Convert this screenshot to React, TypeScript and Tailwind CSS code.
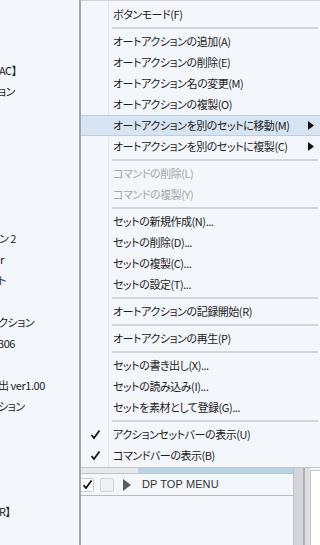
import React from "react";

type Item =
  | { kind: "sep" }
  | { kind: "item"; label: string; disabled?: boolean; checked?: boolean; sub?: boolean; active?: boolean };

const items: Item[] = [
  { kind: "item", label: "ボタンモード(F)" },
  { kind: "sep" },
  { kind: "item", label: "オートアクションの追加(A)" },
  { kind: "item", label: "オートアクションの削除(E)" },
  { kind: "item", label: "オートアクション名の変更(M)" },
  { kind: "item", label: "オートアクションの複製(O)" },
  { kind: "item", label: "オートアクションを別のセットに移動(M)", sub: true, active: true },
  { kind: "item", label: "オートアクションを別のセットに複製(C)", sub: true },
  { kind: "sep" },
  { kind: "item", label: "コマンドの削除(L)", disabled: true },
  { kind: "item", label: "コマンドの複製(Y)", disabled: true },
  { kind: "sep" },
  { kind: "item", label: "セットの新規作成(N)..." },
  { kind: "item", label: "セットの削除(D)..." },
  { kind: "item", label: "セットの複製(C)..." },
  { kind: "item", label: "セットの設定(T)..." },
  { kind: "sep" },
  { kind: "item", label: "オートアクションの記録開始(R)" },
  { kind: "sep" },
  { kind: "item", label: "オートアクションの再生(P)" },
  { kind: "sep" },
  { kind: "item", label: "セットの書き出し(X)..." },
  { kind: "item", label: "セットの読み込み(I)..." },
  { kind: "item", label: "セットを素材として登録(G)..." },
  { kind: "sep" },
  { kind: "item", label: "アクションセットバーの表示(U)", checked: true },
  { kind: "item", label: "コマンドバーの表示(B)", checked: true },
];

const leftRows: { text: string; cls?: string }[] = [
  { text: "" },
  { text: "" },
  { text: "" },
  { text: "AC】", cls: "-ml-[1px]" },
  { text: "ョン", cls: "-ml-[2px]" },
  { text: "" },
  { text: "" },
  { text: "" },
  { text: "" },
  { text: "" },
  { text: "" },
  { text: "ン 2", cls: "-ml-[1px]" },
  { text: "r" },
  { text: "ト", cls: "-ml-[2px] text-[#1f2f4f]" },
  { text: "" },
  { text: "クション", cls: "-ml-[2px]" },
  { text: "306", cls: "-ml-[2px]" },
  { text: "" },
  { text: "出 ver1.00", cls: "-ml-[2px]" },
  { text: "ション", cls: "-ml-[2px]" },
  { text: "" },
  { text: "" },
  { text: "" },
  { text: "" },
  { text: "R】", cls: "-ml-[1px]" },
];

function Check() {
  return (
    <svg width="11" height="11" viewBox="0 0 11 11">
      <path d="M1.5 6 L4 9 L9.5 1.5" fill="none" stroke="#111" strokeWidth="1.7" strokeLinejoin="miter" />
    </svg>
  );
}

export default function App() {
  return (
    <div
      className="w-[320px] h-[545px] overflow-hidden flex bg-[#f3f6fb] text-[#1c1c1c] [font-family:'Noto_Sans_CJK_JP','Noto_Sans',sans-serif] [font-feature-settings:'palt'] text-[11px] tracking-[-0.45px]"
    >
      {/* left panel */}
      <div className="w-[79px] shrink-0 overflow-hidden flex flex-col -mt-[3px]">
        {leftRows.map((r, i) => (
          <div key={i} className="h-[21px] shrink-0 flex items-center whitespace-nowrap">
            <span className={r.cls ?? ""}>{r.text}</span>
          </div>
        ))}
      </div>
      {/* splitter */}
      <div className="w-[2px] shrink-0 bg-[#a3a5aa]" />
      {/* right */}
      <div className="flex-1 flex flex-col min-w-0">
        {/* menu */}
        <div className="h-[468px] shrink-0 border-t border-[#d0d2d6] border-b border-b-[#c4c6ca] bg-[#f3f6fb] relative flex flex-col pt-[3px]">
          <div className="absolute left-[27px] top-0 bottom-0 w-px bg-[#e2e5ea]" />
          {items.map((it, i) =>
            it.kind === "sep" ? (
              <div key={i} className="h-[6px] shrink-0 flex items-center pl-[31px] pr-[2px]">
                <div className="h-[2px] w-full bg-[#d2d4d8]" />
              </div>
            ) : (
              <div
                key={i}
                className={
                  "h-[21px] shrink-0 flex items-center relative " +
                  (it.active ? "bg-[#d7e4f2] border-y border-[#b9cfe6]" : "")
                }
              >
                <div className="w-[27px] shrink-0 flex items-center justify-center pl-[2px]">
                  {it.checked ? <Check /> : null}
                </div>
                <div className={"pl-[5px] flex-1 whitespace-nowrap " + (it.disabled ? "text-[#a4a6aa]" : "text-[#1c1c1c]")}>
                  {it.label}
                </div>
                {it.sub ? (
                  <div className="absolute right-[6px] top-0 bottom-0 flex items-center">
                    <svg width="6" height="9" viewBox="0 0 6 9">
                      <path d="M0 0 L6 4.5 L0 9 Z" fill="#111" />
                    </svg>
                  </div>
                ) : null}
              </div>
            )
          )}
        </div>
        {/* below menu */}
        <div className="flex-1 flex min-h-0">
          <div className="w-[212px] shrink-0 flex flex-col">
            <div className="h-[6px] shrink-0 flex border-b border-[#c2c4c8]">
              <div className="w-[57px] shrink-0 bg-[#e6e8ec]" />
              <div className="flex-1 bg-[#b6d5e6]" />
            </div>
            <div className="h-[22px] shrink-0 flex items-center border-b border-[#b9bbbf] text-[11px] tracking-normal text-[#333] [font-family:'Liberation_Sans',Arial,sans-serif]">
              <div className="w-[13px] h-[14px] shrink-0 bg-white border border-l-0 border-[#c8cacd] rounded-r-[2px] flex items-center justify-center">
                <Check />
              </div>
              <div className="w-[14px] h-[14px] shrink-0 ml-[6px] bg-[#f0f1f3] border border-[#cfd1d4] rounded-[2px]" />
              <div className="ml-[9px] w-[10px] shrink-0 flex items-center">
                <svg width="8" height="12" viewBox="0 0 8 12">
                  <path d="M0 0 L8 6 L0 12 Z" fill="#5a5c60" />
                </svg>
              </div>
              <div className="ml-[9px] whitespace-nowrap tracking-[0.1px]">DP TOP MENU</div>
            </div>
            <div className="flex-1" />
          </div>
          <div className="w-[10px] shrink-0 bg-[#d3d5da] border-l border-[#c0c2c6]" />
          <div className="w-[2px] shrink-0 bg-[#aeb0b5]" />
          <div className="w-[5px] shrink-0 bg-[#dcdee2]" />
          <div className="flex-1 bg-white border-l border-[#c6c8cc] border-t border-t-[#c6c8cc] mt-[2px]" />
        </div>
      </div>
    </div>
  );
}
